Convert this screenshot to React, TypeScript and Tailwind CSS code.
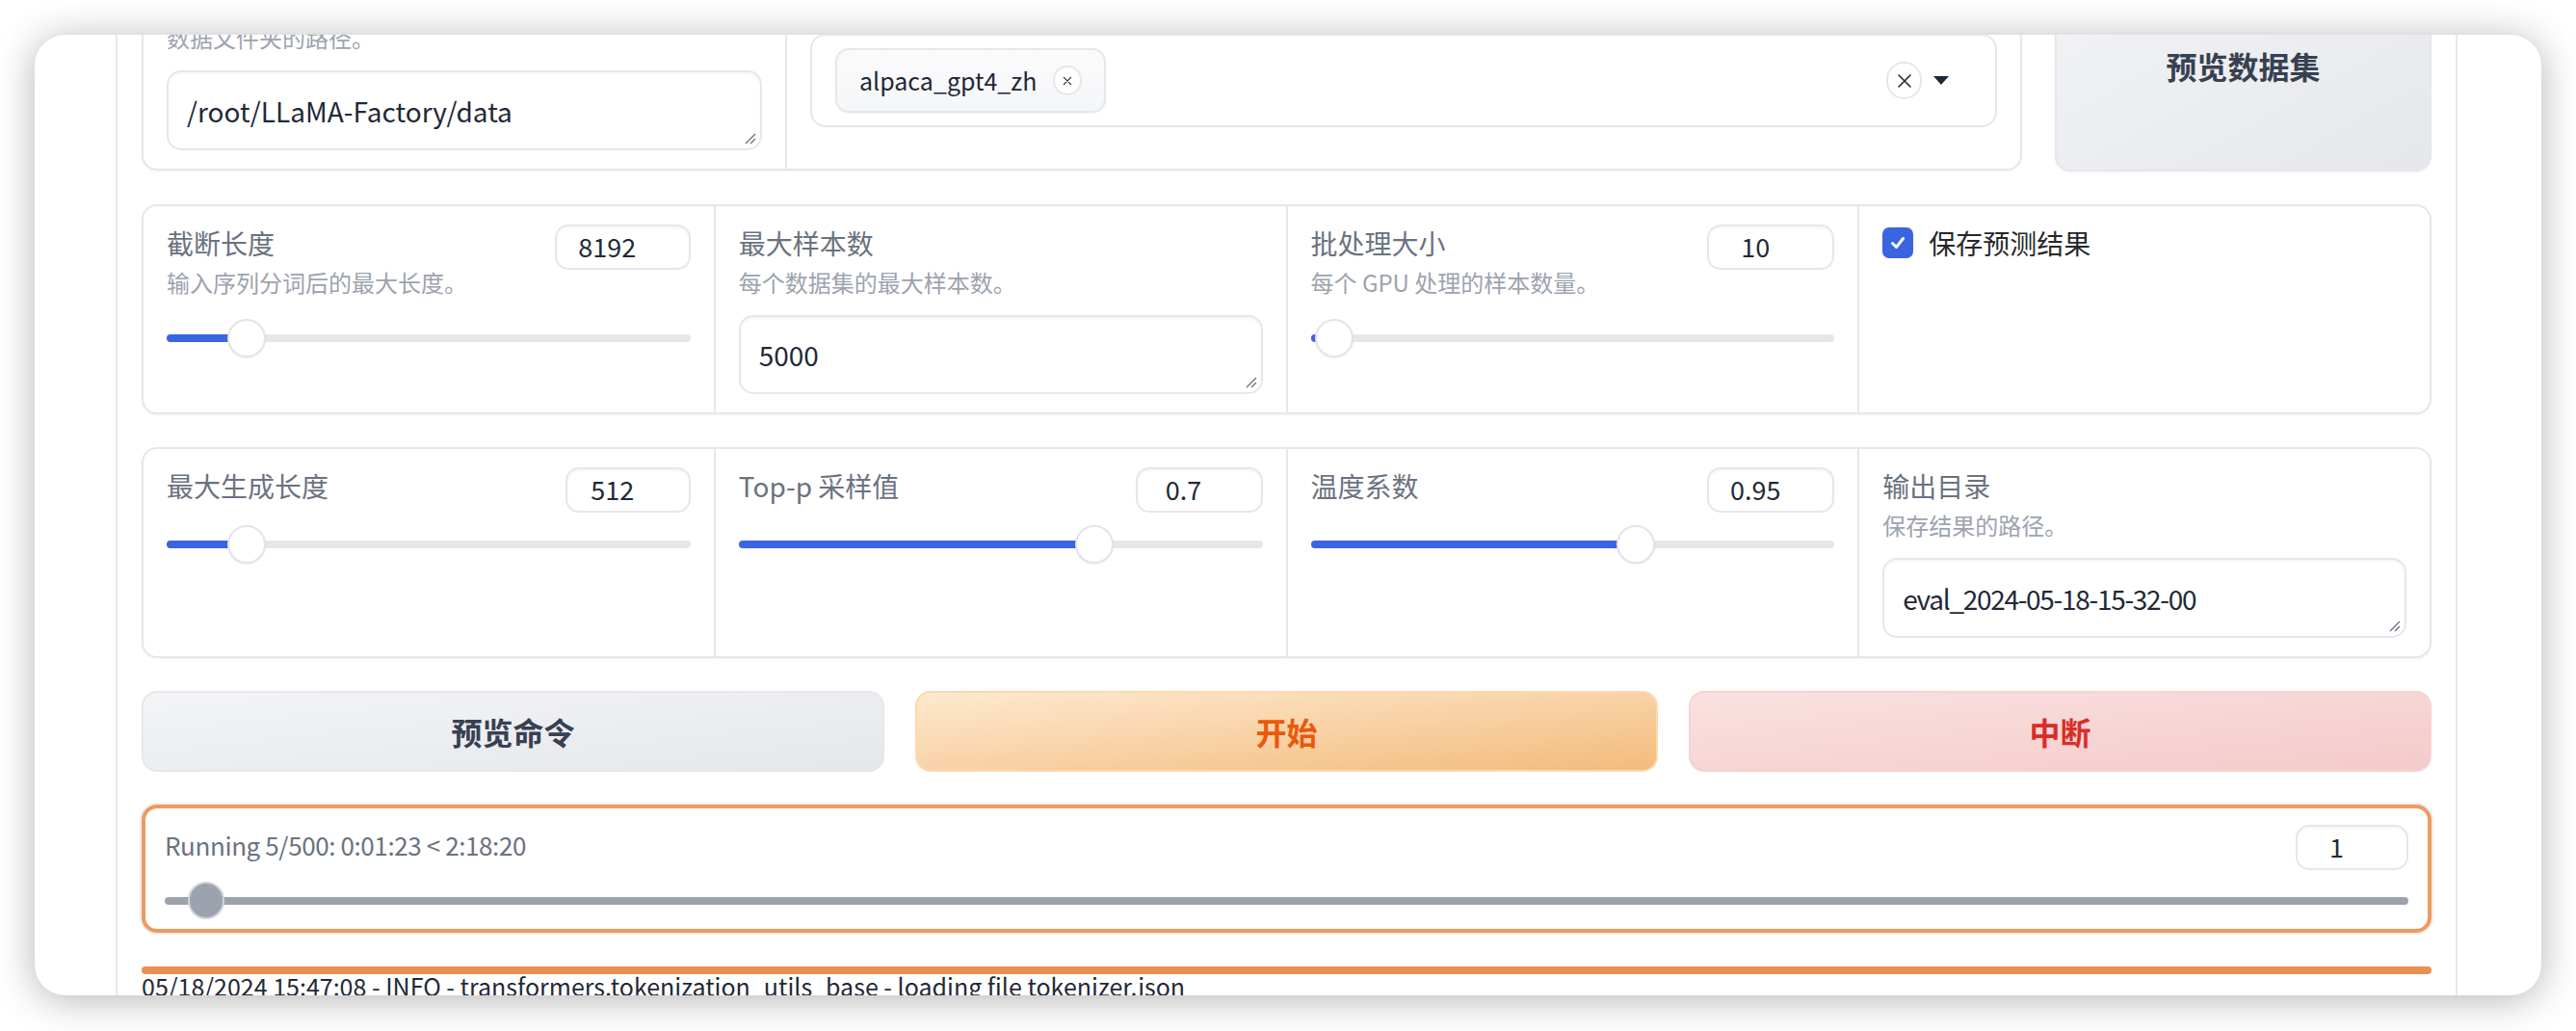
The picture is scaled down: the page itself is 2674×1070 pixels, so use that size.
import type { ReactNode } from 'react'

const FONT = "font-['Noto_Sans_CJK_SC','Noto_Sans',sans-serif]"

function Label({ children }: { children: ReactNode }) {
  return <div className="text-[28px] leading-[38px] text-[#6b7280]">{children}</div>
}

function Info({ children }: { children: ReactNode }) {
  return <div className="mt-[6px] text-[24px] leading-[32px] text-[#9ca3af]">{children}</div>
}

function ResizeHandle() {
  return (
    <svg className="absolute bottom-[4px] right-[4px]" width="14" height="14" viewBox="0 0 14 14">
      <path d="M13 3 L3 13 M13 8 L8 13" stroke="#6b7280" strokeWidth="1.4" fill="none" />
    </svg>
  )
}

function TextBox({ value, h, tight }: { value: string; h: string; tight?: boolean }) {
  return (
    <div
      className={`relative ${h} flex items-center rounded-[15px] border-2 border-[#e5e7eb] bg-white px-[19px] text-[28px] text-[#1f2937] shadow-[inset_0_2px_3px_rgba(0,0,0,0.04)]`}
    >
      <span className={tight ? 'tracking-[-1.3px]' : ''}>{value}</span>
      <ResizeHandle />
    </div>
  )
}

function NumBox({ value, w }: { value: string; w: string }) {
  return (
    <div
      className={`${w} h-[47px] shrink-0 flex items-center justify-center rounded-[14px] border-2 border-[#e5e7eb] bg-white pl-[6px] pr-[38px] text-[27px] text-[#1f2937] shadow-[inset_0_2px_3px_rgba(0,0,0,0.04)]`}
    >
      {value}
    </div>
  )
}

function Slider({ frac }: { frac: number }) {
  return (
    <div className="relative h-[40px]">
      <div className="absolute left-0 right-0 top-[16px] h-[8px] rounded-full bg-[#e5e7eb]" />
      <div
        className="absolute left-0 top-[16px] h-[8px] rounded-full bg-[#3b64e0]"
        style={{ width: `calc(${frac} * (100% - 40px) + 20px)` }}
      />
      <div
        className="absolute top-0 h-[40px] w-[40px] rounded-full border-2 border-[#e3e4e8] bg-white shadow-[0_1px_2px_rgba(0,0,0,0.06)]"
        style={{ left: `calc(${frac} * (100% - 40px))` }}
      />
    </div>
  )
}

type SliderField = {
  label: string
  info?: string
  value: string
  w: string
  frac: number
}

function SliderBlock({ f }: { f: SliderField }) {
  return (
    <div className="bg-white px-[24px] pt-[19px] pb-[19px]">
      <div className="flex items-start justify-between">
        <div>
          <Label>{f.label}</Label>
          {f.info && <Info>{f.info}</Info>}
        </div>
        <NumBox value={f.value} w={f.w} />
      </div>
      <div className={f.info ? 'mt-[22px]' : 'mt-[13px]'}>
        <Slider frac={f.frac} />
      </div>
    </div>
  )
}

function TextBlock({ label, info, value, h, tight }: { label: string; info: string; value: string; h: string; tight?: boolean }) {
  return (
    <div className="bg-white px-[24px] pt-[19px] pb-[19px]">
      <Label>{label}</Label>
      <Info>{info}</Info>
      <div className="mt-[18px]">
        <TextBox value={value} h={h} tight={tight} />
      </div>
    </div>
  )
}

function XMark({ size, stroke }: { size: number; stroke: number }) {
  return (
    <svg width={size} height={size} viewBox="0 0 20 20">
      <path d="M4 4 L16 16 M16 4 L4 16" stroke="#1f2937" strokeWidth={stroke} fill="none" strokeLinecap="round" />
    </svg>
  )
}

const CARD = 'rounded-[16px] border-2 border-[#e5e7eb] bg-[#e5e7eb] shadow-[0_1px_3px_rgba(0,0,0,0.05)] overflow-hidden'

export default function App() {
  return (
    <div className={`w-[2674px] h-[1070px] overflow-hidden bg-white pt-[36px] pl-[36px] ${FONT}`}>
      {/* window */}
      <div className="h-[997px] w-[2602px] overflow-hidden rounded-[32px] bg-white shadow-[0_4px_40px_rgba(0,0,0,0.3)]">
        <div className="ml-[84px] flex h-full w-[2431px] flex-col border-x-2 border-[#e8e8eb] px-[25px]">
          <div className="-mt-[78px] flex flex-col gap-[34px]">

            {/* ── dataset row ── */}
            <div className="flex h-[220px] gap-[34px]">
              <div className={`${CARD} flex h-[219px] w-[1952px] gap-[2px]`}>
                <div className="w-[666px] shrink-0">
                  <div className="h-full bg-white px-[24px] pt-[19px]">
                    <Label>数据路径</Label>
                    <Info>数据文件夹的路径。</Info>
                    <div className="mt-[18px]">
                      <TextBox value="/root/LLaMA-Factory/data" h="h-[83px]" />
                    </div>
                  </div>
                </div>
                <div className="flex-1 bg-white px-[24px] pt-[19px]">
                  <Label>数据集</Label>
                  <div className="mt-[18px] flex h-[97px] items-center rounded-[16px] border-2 border-[#e5e7eb] bg-white pl-[24px] pr-[48px]">
                    <div className="flex h-[67px] items-center gap-[17px] rounded-[14px] border-2 border-[#e5e7eb] bg-linear-to-b from-[#fbfbfc] to-[#f5f6f8] pl-[23px] pr-[23px] text-[25px] text-[#1f2937] shadow-[0_1px_2px_rgba(0,0,0,0.05)]">
                      alpaca_gpt4_zh
                      <span className="flex h-[31px] w-[30px] items-center justify-center rounded-full border-2 border-[#e5e7eb] bg-white">
                        <XMark size={12} stroke={2} />
                      </span>
                    </div>
                    <div className="flex-1" />
                    <span className="flex h-[39px] w-[37px] items-center justify-center rounded-full border-2 border-[#e5e7eb] bg-white">
                      <XMark size={20} stroke={1.6} />
                    </span>
                    <svg className="ml-[12px]" width="16" height="9" viewBox="0 0 16 9">
                      <polygon points="0,0 16,0 8,9" fill="#1f2937" />
                    </svg>
                  </div>
                </div>
              </div>
              <button className="flex-1 rounded-[16px] border-2 border-[#e5e7eb] bg-linear-to-br from-[#f3f4f6] to-[#e5e7eb] text-[32px] font-bold text-[#374151] shadow-[0_1px_3px_rgba(0,0,0,0.05)]">
                预览数据集
              </button>
            </div>

            {/* ── cutoff / samples / batch / predict ── */}
            <div className={`${CARD} grid grid-cols-4 gap-[2px]`}>
              <SliderBlock f={{ label: '截断长度', info: '输入序列分词后的最大长度。', value: '8192', w: 'w-[141px]', frac: 0.125 }} />
              <TextBlock label="最大样本数" info="每个数据集的最大样本数。" value="5000" h="h-[82px]" />
              <SliderBlock f={{ label: '批处理大小', info: '每个 GPU 处理的样本数量。', value: '10', w: 'w-[132px]', frac: 0.008 }} />
              <div className="bg-white px-[24px] pt-[19px]">
                <div className="flex h-[38px] items-center gap-[16px]">
                  <span className="flex h-[32px] w-[32px] items-center justify-center rounded-[7px] bg-[#3b64e0]">
                    <svg width="20" height="20" viewBox="0 0 20 20">
                      <path d="M4.5 10.5 L8.5 14.5 L15.5 5.5" stroke="white" strokeWidth="3" fill="none" strokeLinecap="round" strokeLinejoin="round" />
                    </svg>
                  </span>
                  <span className="text-[28px] text-[#27272a]">保存预测结果</span>
                </div>
              </div>
            </div>

            {/* ── generation params ── */}
            <div className={`${CARD} grid grid-cols-4 gap-[2px]`}>
              <SliderBlock f={{ label: '最大生成长度', value: '512', w: 'w-[130px]', frac: 0.125 }} />
              <SliderBlock f={{ label: 'Top-p 采样值', value: '0.7', w: 'w-[132px]', frac: 0.694 }} />
              <SliderBlock f={{ label: '温度系数', value: '0.95', w: 'w-[132px]', frac: 0.631 }} />
              <TextBlock label="输出目录" info="保存结果的路径。" value="eval_2024-05-18-15-32-00" h="h-[83px]" tight />
            </div>

            {/* ── action buttons ── */}
            <div className="flex h-[84px] gap-[32px]">
              <button className="flex-1 rounded-[16px] border-2 border-[#e5e7eb] bg-linear-to-br from-[#f3f4f6] to-[#e5e7eb] text-[32px] font-bold text-[#374151]">
                预览命令
              </button>
              <button className="flex-1 rounded-[16px] border-2 border-[#fcd9ae] bg-linear-to-br from-[#fde9cf] to-[#f3bb7c] text-[32px] font-bold text-[#ea580c]">
                开始
              </button>
              <button className="flex-1 rounded-[16px] border-2 border-[#f7d2d2] bg-linear-to-br from-[#fae1e1] to-[#f4caca] text-[32px] font-bold text-[#d92d27]">
                中断
              </button>
            </div>

            {/* ── progress ── */}
            <div className="h-[133px] rounded-[16px] border-4 border-[#ef9a5e] bg-white px-[20px] pt-[17px] shadow-[0_0_0_2px_#eceef1]">
              <div className="flex items-start justify-between">
                <div className="mt-[2px] text-[26px] leading-[38px] tracking-[-0.4px] text-[#6b7280]">Running 5/500: 0:01:23 &lt; 2:18:20</div>
                <NumBox value="1" w="w-[117px]" />
              </div>
              <div className="relative mt-[12px] h-[39px]">
                <div className="absolute left-0 right-0 top-[16px] h-[8px] rounded-full bg-[#9ca3af]" />
                <div className="absolute left-[24px] top-0 h-[39px] w-[38px] rounded-full border-2 border-[#d1d5db] bg-[#9ca3af]" />
              </div>
            </div>

            {/* ── log ── */}
            <div className="mt-[1px]">
              <div className="h-[8px] rounded-full bg-[#ec8f50]" />
              <div className="whitespace-nowrap text-[25px] leading-[24px] text-[#1f2937]">
                05/18/2024 15:47:08 - INFO - transformers.tokenization_utils_base - loading file tokenizer.json
              </div>
            </div>

          </div>
        </div>
      </div>
    </div>
  )
}
